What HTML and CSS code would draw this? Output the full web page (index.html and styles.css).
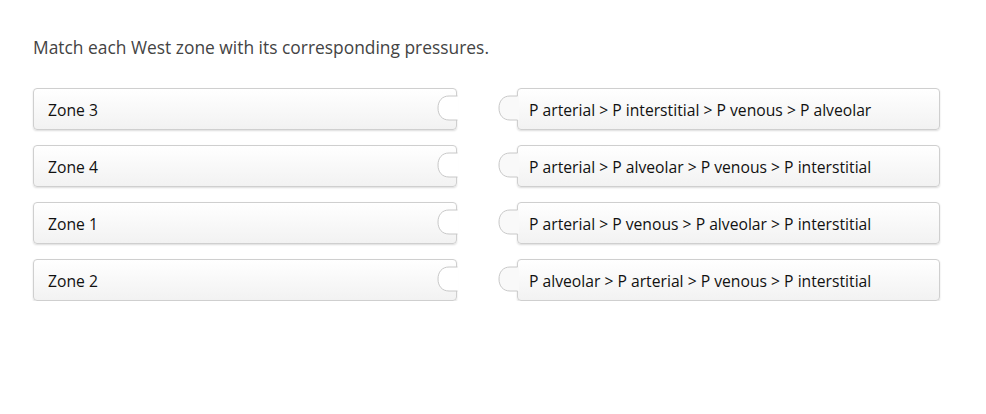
FILE: index.html
```html
<!DOCTYPE html>
<html>
<head>
<meta charset="utf-8">
<link rel="stylesheet" href="styles.css">
</head>
<body>
<div class="page">
  <p class="prompt">Match each West zone with its corresponding pressures.</p>
  <div class="match">
    <div class="col left">
      <div class="card notched"><span>Zone 3</span>
        <svg class="notch" width="22" height="30" viewBox="0 0 22 30"><path class="fill" d="M22 3 L13 3 C6 3 2 8 2 15 C2 22 6 27 13 27 L22 27 Z"/><path class="line" d="M21.5 3 L13 3 C6 3 2 8 2 15 C2 22 6 27 13 27 L21.5 27"/></svg>
      </div>
      <div class="card notched"><span>Zone 4</span>
        <svg class="notch" width="22" height="30" viewBox="0 0 22 30"><path class="fill" d="M22 3 L13 3 C6 3 2 8 2 15 C2 22 6 27 13 27 L22 27 Z"/><path class="line" d="M21.5 3 L13 3 C6 3 2 8 2 15 C2 22 6 27 13 27 L21.5 27"/></svg>
      </div>
      <div class="card notched"><span>Zone 1</span>
        <svg class="notch" width="22" height="30" viewBox="0 0 22 30"><path class="fill" d="M22 3 L13 3 C6 3 2 8 2 15 C2 22 6 27 13 27 L22 27 Z"/><path class="line" d="M21.5 3 L13 3 C6 3 2 8 2 15 C2 22 6 27 13 27 L21.5 27"/></svg>
      </div>
      <div class="card notched"><span>Zone 2</span>
        <svg class="notch" width="22" height="30" viewBox="0 0 22 30"><path class="fill" d="M22 3 L13 3 C6 3 2 8 2 15 C2 22 6 27 13 27 L22 27 Z"/><path class="line" d="M21.5 3 L13 3 C6 3 2 8 2 15 C2 22 6 27 13 27 L21.5 27"/></svg>
      </div>
    </div>
    <div class="col right">
      <div class="card tabbed"><span>P arterial &gt; P interstitial &gt; P venous &gt; P alveolar</span>
        <svg class="tab" width="22" height="30" viewBox="0 0 22 30"><path class="tfill" d="M22 3 L13 3 C6 3 2 8 2 15 C2 22 6 27 13 27 L22 27 Z"/><path class="line" d="M20.5 3 L13 3 C6 3 2 8 2 15 C2 22 6 27 13 27 L20.5 27"/></svg>
      </div>
      <div class="card tabbed"><span>P arterial &gt; P alveolar &gt; P venous &gt; P interstitial</span>
        <svg class="tab" width="22" height="30" viewBox="0 0 22 30"><path class="tfill" d="M22 3 L13 3 C6 3 2 8 2 15 C2 22 6 27 13 27 L22 27 Z"/><path class="line" d="M20.5 3 L13 3 C6 3 2 8 2 15 C2 22 6 27 13 27 L20.5 27"/></svg>
      </div>
      <div class="card tabbed"><span>P arterial &gt; P venous &gt; P alveolar &gt; P interstitial</span>
        <svg class="tab" width="22" height="30" viewBox="0 0 22 30"><path class="tfill" d="M22 3 L13 3 C6 3 2 8 2 15 C2 22 6 27 13 27 L22 27 Z"/><path class="line" d="M20.5 3 L13 3 C6 3 2 8 2 15 C2 22 6 27 13 27 L20.5 27"/></svg>
      </div>
      <div class="card tabbed"><span>P alveolar &gt; P arterial &gt; P venous &gt; P interstitial</span>
        <svg class="tab" width="22" height="30" viewBox="0 0 22 30"><path class="tfill" d="M22 3 L13 3 C6 3 2 8 2 15 C2 22 6 27 13 27 L22 27 Z"/><path class="line" d="M20.5 3 L13 3 C6 3 2 8 2 15 C2 22 6 27 13 27 L20.5 27"/></svg>
      </div>
    </div>
  </div>
</div>
</body>
</html>
```

FILE: styles.css
```css
html, body {
  margin: 0;
  padding: 0;
  background: #ffffff;
}
.page {
  padding: 35px 0 0 33px;
  font-family: "Open Sans", "Noto Sans", sans-serif;
}
.prompt {
  margin: 0 0 29px 0;
  font-size: 17.4px;
  line-height: 24px;
  color: #444444;
}
.match {
  display: flex;
  gap: 60px;
}
.col {
  display: flex;
  flex-direction: column;
  gap: 15px;
}
.left { width: 424px; }
.right { width: 423px; }
.card {
  position: relative;
  box-sizing: border-box;
  height: 42px;
  padding-top: 2px;
  border: 1px solid #cfcfcf;
  border-radius: 4px;
  background: linear-gradient(#ffffff, #f2f2f2);
  box-shadow: 0 1px 2px rgba(0, 0, 0, 0.14);
  display: flex;
  align-items: center;
  font-size: 15.7px;
  color: #111111;
}
.notched { padding-left: 14px; }
.tabbed { padding-left: 11px; }
.notch {
  position: absolute;
  right: -2px;
  top: 4px;
}
.tab {
  position: absolute;
  left: -21px;
  top: 4px;
}
.fill { fill: #ffffff; }
.tfill { fill: #f9f9f9; }
.line {
  fill: none;
  stroke: #c8c8c8;
  stroke-width: 1;
}
```
